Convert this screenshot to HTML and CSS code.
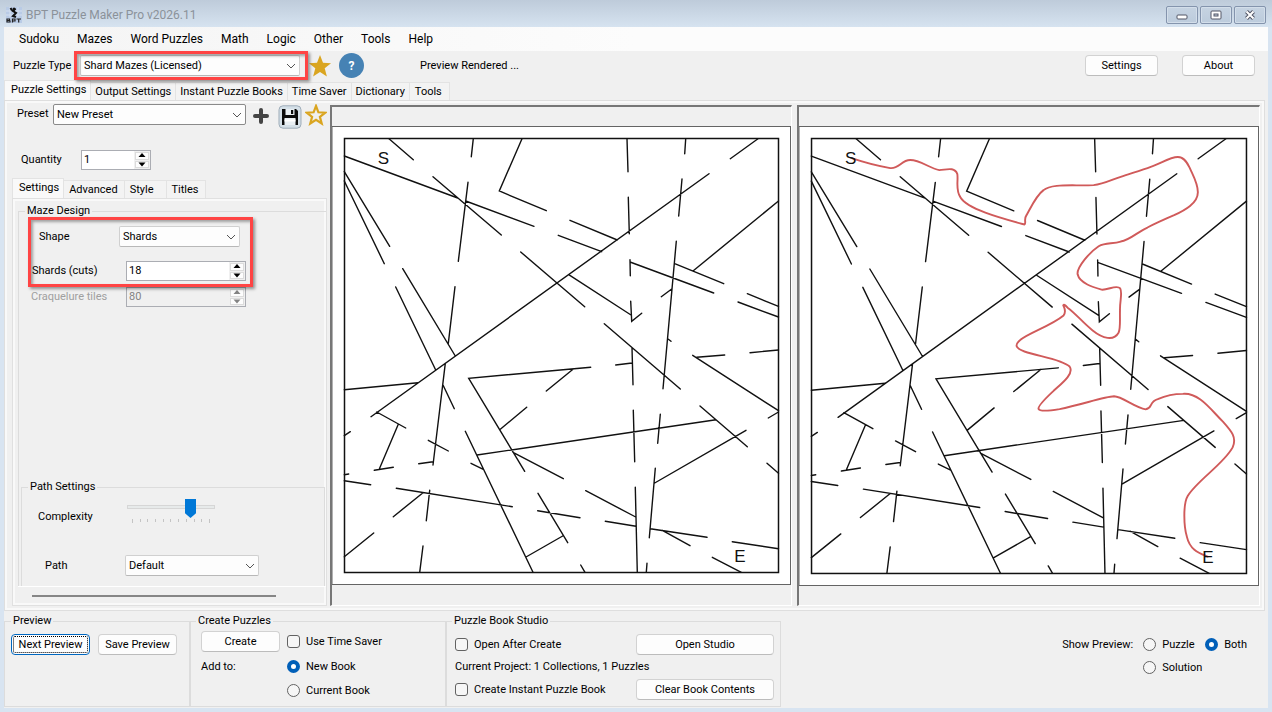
FILE: index.html
```html
<!DOCTYPE html>
<html lang="en">
<head>
<meta charset="utf-8">
<title>BPT Puzzle Maker Pro v2026.11</title>
<link rel="stylesheet" href="styles.css">
</head>
<body>
<svg class="defs" aria-hidden="true">
  <symbol id="chevron" viewBox="0 0 10 6"><path d="M1 1l4 4 4-4" fill="none" stroke="#555" stroke-width="1"/></symbol>
  <symbol id="up" viewBox="0 0 8 5"><path d="M4 0l3.500 4h-7z" fill="currentColor"/></symbol>
  <symbol id="down" viewBox="0 0 8 5"><path d="M4 4.500L.5.500h7z" fill="currentColor"/></symbol>
  <symbol id="maze" viewBox="332 126 459 459">
    <rect x="332" y="126.500" width="458.500" height="458" fill="#fff" stroke="#646464"/>
    <rect x="344.500" y="138.500" width="434" height="434" fill="none" stroke="#111" stroke-width="1.500"/>
    <path fill="none" stroke="#111" stroke-width="1.400" stroke-linecap="round" d="M389 138.700L413.300 159.700M344.300 156L457.700 198M433 176.700L501.300 235M468 182.300L458.300 261.300M473.300 138.700L471.300 156.700M522 138.700L499.300 191L546.300 210.700M465.700 201L534 226.300M520.700 252L584.700 306.700M344.300 171.700L389.700 246.300M344.300 181L384.300 263.700M402.700 268.700L455.300 356M395.700 287L435.700 370M455 286.700L448.300 343.300M371 416.700L709 173.700
    M627 138.700L628 171.700M628.300 197.300L629.300 233.700M685.700 138.700L684.700 153.700M682 179L678.700 216M730.300 158.700L758 138.700M778.500 201L693 271M674.700 263.700L723.700 283.700M747.300 293.700L778.500 306.300M738 302L778.500 317M630 262L713.700 293M630 259.700L630.300 275.700M570 220.300L617.300 240M558.300 235.300L601.700 251.700M676.300 241.300L663 388.700M671.700 289L661.300 296.700M568.700 274.700L631 315M630.700 301.300L631.700 321.300L641.700 313.300M604.300 323.700L680.300 389M667.700 338.700L671 341.300
    M344.300 389.700L418 382.700M445.300 363.300L433 465M443 385L454.300 408.700M376.700 412L405.700 428M398.300 424.300L379.300 469M374.300 470.300L393.300 467.300M418.700 463.700L433 461.700M428.300 440.300L448.300 451M344.300 435.700L350.300 431.700M344.300 474.700L348.700 474M344.300 480.700L370.700 484.700M396.300 488.300L512.300 506.700M422.700 493L393.300 516.700M429.700 490.300L426.300 520.700M373.700 533L344.300 556.700M423 546L419.700 572.300M465.300 431.300L533 572.300M471 463.300L483.300 469.300M477 455L716 419.700M590.700 367.300L468.700 378.300L524.700 471.300M499.700 429.700L526.700 407.300M546.300 391L573.300 369M513 452.300L563.300 478.700M538 493.300L567.700 542.700M537.700 510.700L580 517.700M526 557L562.700 536
    M632 347.700L633 384.700M615.700 365L632 363M633.300 410.300L634.700 461.700M660.300 414.300L657.700 443.300M692.700 355.300L778.500 410.700M696.700 357.300L724.700 355M750 352.700L778.500 350M768.300 418L778.500 412M700 406L747.300 446.700M746 430.300L654.700 483M767 463.300L778.500 473.300M655.300 468.300L649.300 537.700M635.300 487.300L637.300 572.300M585.700 490.700L635.700 517M605.300 521.300L636 526.300M650.300 528.700L707 537.300M662.300 530.300L690 545.700M732.300 541.700L778.500 548.700M712.300 557.300L741.300 572.300M647 563.300L646.300 572.300M580.700 565L585 572.300"/>
  </symbol>
</svg>

<header class="titlebar">
  <svg class="app-icon" viewBox="0 0 16 16" aria-hidden="true">
    <rect width="16" height="16" fill="#b9cbe6"/><path d="M4 0v10M8 0v10M12 0v10M0 4h16M0 8h16" stroke="#d5e0f0" stroke-width="1"/>
    <path d="M4.500 1l1.500 2.500M9.500 1.500L7 4l3 2-3 3 3 1" fill="none" stroke="#111" stroke-width="2"/><circle cx="8" cy="2" r="1.500" fill="#111"/>
    <path d="M1 11.500v4M1 12h2.500v1.500H1.500M1 15h3v-1.500M6.500 11.500v4M6.500 12H9v2H7M10.500 12H15M12.700 12v3.500" fill="none" stroke="#222" stroke-width="1.200"/>
  </svg>
  <span class="title">BPT Puzzle Maker Pro v2026.11</span>
  <button class="sys" aria-label="Minimize"><svg viewBox="0 0 12 10"><rect x="1" y="5" width="10" height="4" rx="1" fill="#fff" stroke="#535666"/></svg></button>
  <button class="sys" aria-label="Maximize"><svg viewBox="0 0 12 10"><rect x="1" y="1" width="10" height="8" rx="1" fill="#fff" stroke="#535666"/><rect x="4" y="4" width="4" height="2" fill="#c5d2e2" stroke="#535666"/></svg></button>
  <button class="sys" aria-label="Close"><svg viewBox="0 0 12 10"><path d="M2.500 1.500l7 7M9.500 1.500l-7 7" stroke="#535666" stroke-width="4"/><path d="M2.500 1.500l7 7M9.500 1.500l-7 7" stroke="#fff" stroke-width="2"/></svg></button>
</header>

<main class="window">
  <nav class="menubar">
    <button>Sudoku</button><button>Mazes</button><button>Word Puzzles</button><button>Math</button><button>Logic</button><button>Other</button><button>Tools</button><button>Help</button>
  </nav>

  <section class="typebar">
    <label class="type-label" for="type">Puzzle Type</label>
    <div class="marked type-mark"><div class="combo"><select id="type"><option>Shard Mazes (Licensed)</option></select><svg><use href="#chevron"/></svg></div></div>
    <button class="icon-btn star" aria-label="Favorite"><svg viewBox="0 0 22 22"><path d="M11 0l3 7.700 8 .6-6.300 5 2.200 8.200L11 17l-6.900 4.500 2.200-8.200L0 8.300l8-.6z" fill="#daa520"/></svg></button>
    <button class="icon-btn help" aria-label="Help">?</button>
    <output class="status">Preview Rendered ...</output>
    <button class="btn settings-btn">Settings</button>
    <button class="btn about-btn">About</button>
  </section>

  <div class="tabs main-tabs" role="tablist">
    <button class="tab active" role="tab">Puzzle Settings</button><button class="tab" role="tab">Output Settings</button><button class="tab" role="tab">Instant Puzzle Books</button><button class="tab" role="tab">Time Saver</button><button class="tab" role="tab">Dictionary</button><button class="tab" role="tab">Tools</button>
  </div>

  <section class="workspace">
    <aside class="side">
      <div class="preset">
        <label for="preset">Preset</label>
        <div class="combo dark"><select id="preset"><option>New Preset</option></select><svg><use href="#chevron"/></svg></div>
        <button class="icon-btn add" aria-label="Add preset"><svg viewBox="0 0 16 16"><path d="M8 2v12M2 8h12" stroke="#444" stroke-width="4" stroke-linecap="round"/></svg></button>
        <button class="icon-btn save" aria-label="Save preset"><svg viewBox="0 0 24 24"><rect x="1" y=".8" width="22" height="22.400" rx="4" fill="#d5e0e8" stroke="#9fadb9"/><path d="M4 4h14l2 2v14H4V4z" fill="#0b0b0b"/><path d="M7.500 4h9v6h-9zM6.500 13h11v7h-11z" fill="#e9eff3"/><path d="M13 5h2.200v4H13z" fill="#0b0b0b"/><path d="M6.500 15.500h11" stroke="#fff" stroke-width="2"/></svg></button>
        <button class="icon-btn star" aria-label="Favorite preset"><svg viewBox="0 0 22 22"><path d="M11 2l2.400 6.300 6.800.4-5.300 4.200 1.800 6.600-5.700-3.700-5.700 3.700 1.800-6.600L1.800 8.700l6.800-.4z" fill="none" stroke="#daa520" stroke-width="2.200"/></svg></button>
      </div>
      <div class="quantity">
        <label for="qty">Quantity</label>
        <div class="spin"><input id="qty" type="number" value="1"><span class="arrows"><button aria-label="More"><svg><use href="#up"/></svg></button><button aria-label="Less"><svg><use href="#down"/></svg></button></span></div>
      </div>

      <div class="tabs sub-tabs" role="tablist">
        <button class="tab active" role="tab">Settings</button><button class="tab" role="tab">Advanced</button><button class="tab" role="tab">Style</button><button class="tab" role="tab">Titles</button>
      </div>
      <div class="subpage">
        <fieldset class="group maze-design">
          <legend>Maze Design</legend>
          <div class="marked design-mark">
            <div class="row shape-row"><label for="shape">Shape</label><div class="combo"><select id="shape"><option>Shards</option></select><svg><use href="#chevron"/></svg></div></div>
            <div class="row cuts-row"><label for="cuts">Shards (cuts)</label><div class="spin"><input id="cuts" type="number" value="18"><span class="arrows"><button aria-label="More cuts"><svg><use href="#up"/></svg></button><button aria-label="Fewer cuts"><svg><use href="#down"/></svg></button></span></div></div>
          </div>
          <div class="row tiles-row"><label for="tiles">Craquelure tiles</label><div class="spin off"><input id="tiles" type="number" value="80" disabled><span class="arrows"><button disabled aria-label="More tiles"><svg><use href="#up"/></svg></button><button disabled aria-label="Fewer tiles"><svg><use href="#down"/></svg></button></span></div></div>
          <fieldset class="group path-settings">
            <legend>Path Settings</legend>
            <div class="row complexity-row"><label for="complexity">Complexity</label>
              <div class="slider"><input id="complexity" type="range" min="0" max="100" value="76">
              <div class="ticks"><i></i><i></i><i></i><i></i><i></i><i></i><i></i><i></i><i></i><i></i><i></i></div></div></div>
            <div class="row path-row"><label for="path">Path</label><div class="combo"><select id="path"><option>Default</option></select><svg><use href="#chevron"/></svg></div></div>
          </fieldset>
        </fieldset>
        <div class="scroll"><div class="thumb"></div></div>
      </div>
    </aside>

    <div class="previews">
      <div class="pane"><svg class="sheet" viewBox="332 126 459 459" role="img" aria-label="Puzzle preview"><use href="#maze" x="332" y="126" width="459" height="459"/>
        <text class="maze-mark" x="383.500" y="164">S</text><text class="maze-mark" x="740" y="562">E</text>
      </svg></div>
      <div class="pane"><svg class="sheet" viewBox="332 126 459 459" role="img" aria-label="Solution preview"><use href="#maze" x="332" y="126" width="459" height="459"/>
        <path fill="none" stroke="#d05a5a" stroke-width="1.900" stroke-linejoin="round" stroke-linecap="round" d="M385.300 158.300C396 162 412 166 423 168C432 169 434 160 443 160C453 160 462 168 472 170C478 170 487 166 490 174C491 181 488 190 493 197C500 209 534 218 557 224.300C559 223 556 219 559 215C564 206 569 195 576 190C584 183 606 186 626 185C636 184 643 180 653 176.700C664 173 674 170 683 166.700C692 164 702 157 710 157C717 157 720 164 722 168C725 175 730 183 730 192C730 203 717 210 706.300 215C697 219 688 223 679.700 227.300C671 231 662 240 653 241.300C645 244 638 242 631 246C622 252 609 267 610 274C612 283 626 287 634 289.300C640 290 649 284 652.500 288C655 293 652 300 652.300 310C652 319 653 327 651 332C646 341 635 338 625 330C615 322 608 313 600 307.300Q596 303 595.700 305C597 308 599 311 596 315C584 325 560 333 553 339.300C546 345 549 348 557 351C572 356 595 359 602 366C607 373 594 383 586.300 390C580 396 570 405 571 408.300C572 411 583 410 592 408.500C614 404 637 396 646.300 395.700C655 396 667 407 678 408.700C685 408 681 401 690 398.500C698 395 707 393.300 715 393.300C731 392 742 408 755 421C764 431 769 437 764.700 446.700C756 463 729 480 720 495C715 503 716 526 719 535.700C722 549 731 552 739.700 555.700"/>
        <text class="maze-mark" x="383.500" y="164">S</text><text class="maze-mark" x="740" y="562">E</text>
      </svg></div>
    </div>
  </section>

  <footer class="bottom">
    <fieldset class="group g-preview">
      <legend>Preview</legend>
      <div class="pair"><button class="btn focus">Next Preview</button><button class="btn">Save Preview</button></div>
    </fieldset>
    <fieldset class="group g-create">
      <legend>Create Puzzles</legend>
      <div class="create-grid">
        <button class="btn">Create</button><label><input type="checkbox">Use Time Saver</label>
        <span>Add to:</span><label><input type="radio" name="book" checked>New Book</label>
        <label class="second"><input type="radio" name="book">Current Book</label>
      </div>
    </fieldset>
    <fieldset class="group g-studio">
      <legend>Puzzle Book Studio</legend>
      <div class="studio-grid">
        <label><input type="checkbox">Open After Create</label><button class="btn">Open Studio</button>
        <span class="wide">Current Project: 1 Collections, 1 Puzzles</span>
        <label><input type="checkbox">Create Instant Puzzle Book</label><button class="btn">Clear Book Contents</button>
      </div>
    </fieldset>
    <div class="show" role="radiogroup" aria-label="Show Preview">
      <span>Show Preview:</span>
      <label><input type="radio" name="show">Puzzle</label>
      <label><input type="radio" name="show" checked>Both</label>
      <label class="second"><input type="radio" name="show">Solution</label>
    </div>
  </footer>
</main>
</body>
</html>
```
FILE: styles.css
```css
* { box-sizing: border-box; }
body {
  margin: 0;
  min-height: 100vh;
  display: flex;
  flex-direction: column;
  padding-bottom: 4px;
  background: #d8e4f1;
  color: #000;
  font: 11px/14px Roboto, "Liberation Sans", sans-serif;
}
button, input, select { font: inherit; color: inherit; margin: 0; padding: 0; }
button { border: 0; background: none; }
.defs { position: absolute; width: 0; height: 0; }

.titlebar {
  display: flex;
  align-items: center;
  height: 27px;
  padding: 2px 6px 0;
  background: linear-gradient(#becbda, #d6e3f0);
}
.app-icon { width: 16px; height: 16px; }
.title { flex: 1; padding-left: 4px; font-size: 12px; color: #8b929a; }
.sys {
  display: flex;
  align-items: center;
  justify-content: center;
  width: 32px;
  height: 18px;
  margin-left: 2px;
  border: 1px solid #8494ad;
  border-radius: 2px;
  background: linear-gradient(#c6d3e2, #bccbdc);
  box-shadow: inset 0 0 0 1px #d3deea;
}
.sys svg { width: 12px; height: 10px; }

.window {
  flex: 1;
  display: flex;
  flex-direction: column;
  margin: 0 4px;
  background: #f0f0f0;
}
.menubar {
  display: flex;
  gap: 18px;
  height: 24px;
  padding-left: 15px;
  background: linear-gradient(90deg, #f4f4f4, #fcfcfc 50%);
  font-size: 12px;
}

.typebar {
  display: flex;
  align-items: center;
  height: 29px;
  padding: 0 13px 0 9px;
}
.type-label { width: 67px; }
.type-mark { width: 220px; }
.combo { position: relative; }
.combo select {
  display: block;
  width: 100%;
  height: 21px;
  padding: 0 20px 0 3px;
  border: 1px solid #d0d0d0;
  border-bottom-color: #b8b8b8;
  border-radius: 2px;
  background: #fdfdfd;
  appearance: none;
}
.combo.dark select { border-color: #8a8a8a; }
.combo svg {
  position: absolute;
  right: 4px;
  top: 8px;
  width: 10px;
  height: 6px;
  pointer-events: none;
}
.marked { position: relative; }
.marked::after {
  content: "";
  position: absolute;
  border: 3px solid #ff4444;
  box-shadow: 2px 2px 3px #00000066, inset 2px 2px 3px #00000055;
  pointer-events: none;
}
.type-mark::after { inset: -4px -8px -4px -6px; }
.icon-btn { display: block; flex: none; }
.icon-btn svg { display: block; width: 100%; height: 100%; }
.star { width: 22px; height: 22px; }
.typebar .star { margin-left: 9px; }
.help {
  width: 25px;
  height: 25px;
  margin-left: 8px;
  border-radius: 50%;
  background: #4682b4;
  color: #fff;
  font-weight: 700;
  font-size: 12px;
}
.status { flex: 1; margin-left: 56px; }
.btn {
  height: 21px;
  border: 1px solid #d2d2d2;
  border-bottom-color: #bcbcbc;
  border-radius: 4px;
  background: #fdfdfd;
}
.settings-btn, .about-btn { width: 73px; }
.settings-btn { margin-right: 24px; }

.tabs { display: flex; align-items: flex-end; }
.tab {
  height: 18px;
  padding: 0 4px;
  border: 1px solid #e3e3e3;
  border-width: 1px 1px 0 0;
  background: #f3f3f3;
}
.tab.active {
  height: 20px;
  padding: 0 4px 2px 6px;
  border-left-width: 1px;
  background: #f9f9f9;
}
.main-tabs .tab:last-child { padding: 0 7px 0 5px; }

.workspace {
  flex: 1;
  display: grid;
  grid-template-columns: 322px 1fr;
  margin-right: 3px;
  padding: 0 4px 4px 3px;
  border: 1px solid #dedede;
  box-shadow: inset 0 0 0 2px #f9f9f9;
}
.side { display: flex; flex-direction: column; padding-left: 4px; }
.preset { display: flex; align-items: flex-start; padding-top: 3px; }
.preset label { width: 41px; padding: 3px 0 0 5px; }
.preset .combo { width: 193px; }
.add { width: 16px; height: 16px; margin: 4px 0 0 7px; }
.save { width: 24px; height: 24px; margin: 1px 3px 0 9px; }
.quantity { display: flex; align-items: center; padding: 21px 0 8px 9px; }
.quantity label { width: 60px; }
.quantity .spin { width: 70px; }
.spin {
  display: flex;
  height: 20px;
  border: 1px solid #abadb3;
  background: #fff;
}
.spin input {
  flex: 1;
  min-width: 0;
  padding: 0 2px;
  border: 0;
  background: none;
  appearance: textfield;
}
.spin input::-webkit-inner-spin-button { appearance: none; }
.arrows {
  display: grid;
  grid-template-rows: 1fr 1fr;
  gap: 1px;
  width: 16px;
  padding: 1px;
  background: #f0f0f0;
}
.arrows button {
  display: flex;
  align-items: center;
  justify-content: center;
  border: 1px solid #dcdcdc;
  background: #fdfdfd;
}
.arrows svg { flex: none; width: 8px; height: 5px; }
.spin.off { background: #f0f0f0; color: #838383; }

.sub-tabs .tab { padding: 0 6px 0 5px; }
.sub-tabs .active { padding: 0 4px 2px 6px; }
.sub-tabs .tab:nth-child(3) { padding-right: 12px; }
.subpage {
  flex: 1;
  display: flex;
  flex-direction: column;
  margin-right: 3px;
  padding: 5px 0 0 5px;
  border: 1px solid #e0e0e0;
  box-shadow: inset 0 0 0 2px #f9f9f9;
}
.group {
  min-width: 0;
  margin: 0;
  padding: 0;
  border: 1px solid #dcdcdc;
}
.group legend { padding: 0 2px; }
.maze-design {
  flex: 1;
  display: flex;
  flex-direction: column;
  border-width: 1px 0 0 1px;
}
.maze-design > legend { margin-left: 6px; }
.row { display: flex; align-items: center; }
.design-mark { margin-top: 8px; }
.design-mark::after { inset: -9px 73px -6px 9px; }
.shape-row { padding-left: 20px; }
.shape-row label { width: 80px; }
.shape-row .combo { width: 121px; }
.cuts-row { padding: 14px 0 0 13px; }
.cuts-row label { width: 94px; }
.maze-design .spin { width: 120px; }
.tiles-row { padding: 6px 0 0 12px; color: #9f9f9f; }
.tiles-row label { width: 95px; }
.path-settings {
  height: 106px;
  margin: auto 1px 0 2px;
  border-bottom: 0;
}
.path-settings legend { margin-left: 6px; }
.complexity-row { padding: 2px 0 0 16px; }
.complexity-row label { width: 89px; padding-top: 14px; }
.slider { width: 88px; }
.slider input {
  display: block;
  width: 100%;
  height: 20px;
  background: none;
  appearance: none;
}
.slider input::-webkit-slider-runnable-track {
  height: 4px;
  border: 1px solid #d6d6d6;
  background: #e7eaea;
}
.slider input::-webkit-slider-thumb {
  width: 11px;
  height: 19px;
  margin-top: -7px;
  background: #0078d7;
  clip-path: polygon(0 0, 100% 0, 100% 75%, 50% 100%, 0 75%);
  appearance: none;
}
.ticks { display: flex; justify-content: space-between; padding: 2px 5px 0; }
.ticks i { width: 1px; height: 3px; background: #c4c4c4; }
.ticks i:first-child, .ticks i:last-child { height: 4px; }
.path-row { padding: 31px 0 0 23px; }
.path-row label { width: 80px; }
.path-row .combo { width: 134px; }
.scroll { padding: 8px 50px 8px 14px; border-top: 1px solid #fff; }
.thumb { height: 2px; background: #868686; }

.previews { display: grid; grid-template-columns: 462fr 463fr; gap: 5px; padding-top: 4px; }
.pane {
  padding-top: 19px;
  border: 2px solid #696969;
  border-width: 2px 1px 1px 2px;
  border-color: #777 #fff #fff #777;
}
.sheet { display: block; width: 100%; height: auto; }
.maze-mark { font: 17px "Liberation Sans", sans-serif; text-anchor: middle; fill: #111; }

.bottom {
  display: flex;
  align-items: stretch;
  height: 97px;
  padding: 3px 0 1px;
}
.bottom legend { margin-left: 5px; }
.g-preview { width: 186px; }
.g-preview legend { margin-left: 6px; }
.g-create { width: 256px; }
.g-studio { width: 335px; }
.pair { display: flex; gap: 8px; padding: 6px 6px 0; }
.pair .btn { width: 79px; }
.focus { border: 1px solid #0067c0; outline: 1px dotted #000; outline-offset: -3px; }
.bottom label { display: flex; align-items: center; gap: 6px; }
.bottom input {
  flex: none;
  width: 13px;
  height: 13px;
  border: 1px solid #626262;
  border-radius: 3px;
  background: #f6f6f6;
  appearance: none;
}
.bottom input[type="radio"] { border-radius: 50%; }
.bottom input[type="radio"]:checked { border: 4px solid #005fb8; background: #fff; }
.create-grid {
  display: grid;
  grid-template-columns: 79px 1fr;
  grid-template-rows: 21px 27px 19px;
  align-items: center;
  column-gap: 7px;
  row-gap: 1px;
  padding: 3px 0 0 10px;
}
.second { grid-column: 2; }
.studio-grid {
  display: grid;
  grid-template-columns: 1fr 138px;
  grid-template-rows: 21px 24px 21px;
  align-items: center;
  padding: 6px 6px 0 8px;
}
.wide { grid-column: 1 / 3; }
.show {
  display: grid;
  grid-template-columns: 81px 62px auto;
  grid-auto-rows: 23px;
  align-content: start;
  align-items: center;
  margin-left: auto;
  padding: 19px 21px 0 0;
}
```
